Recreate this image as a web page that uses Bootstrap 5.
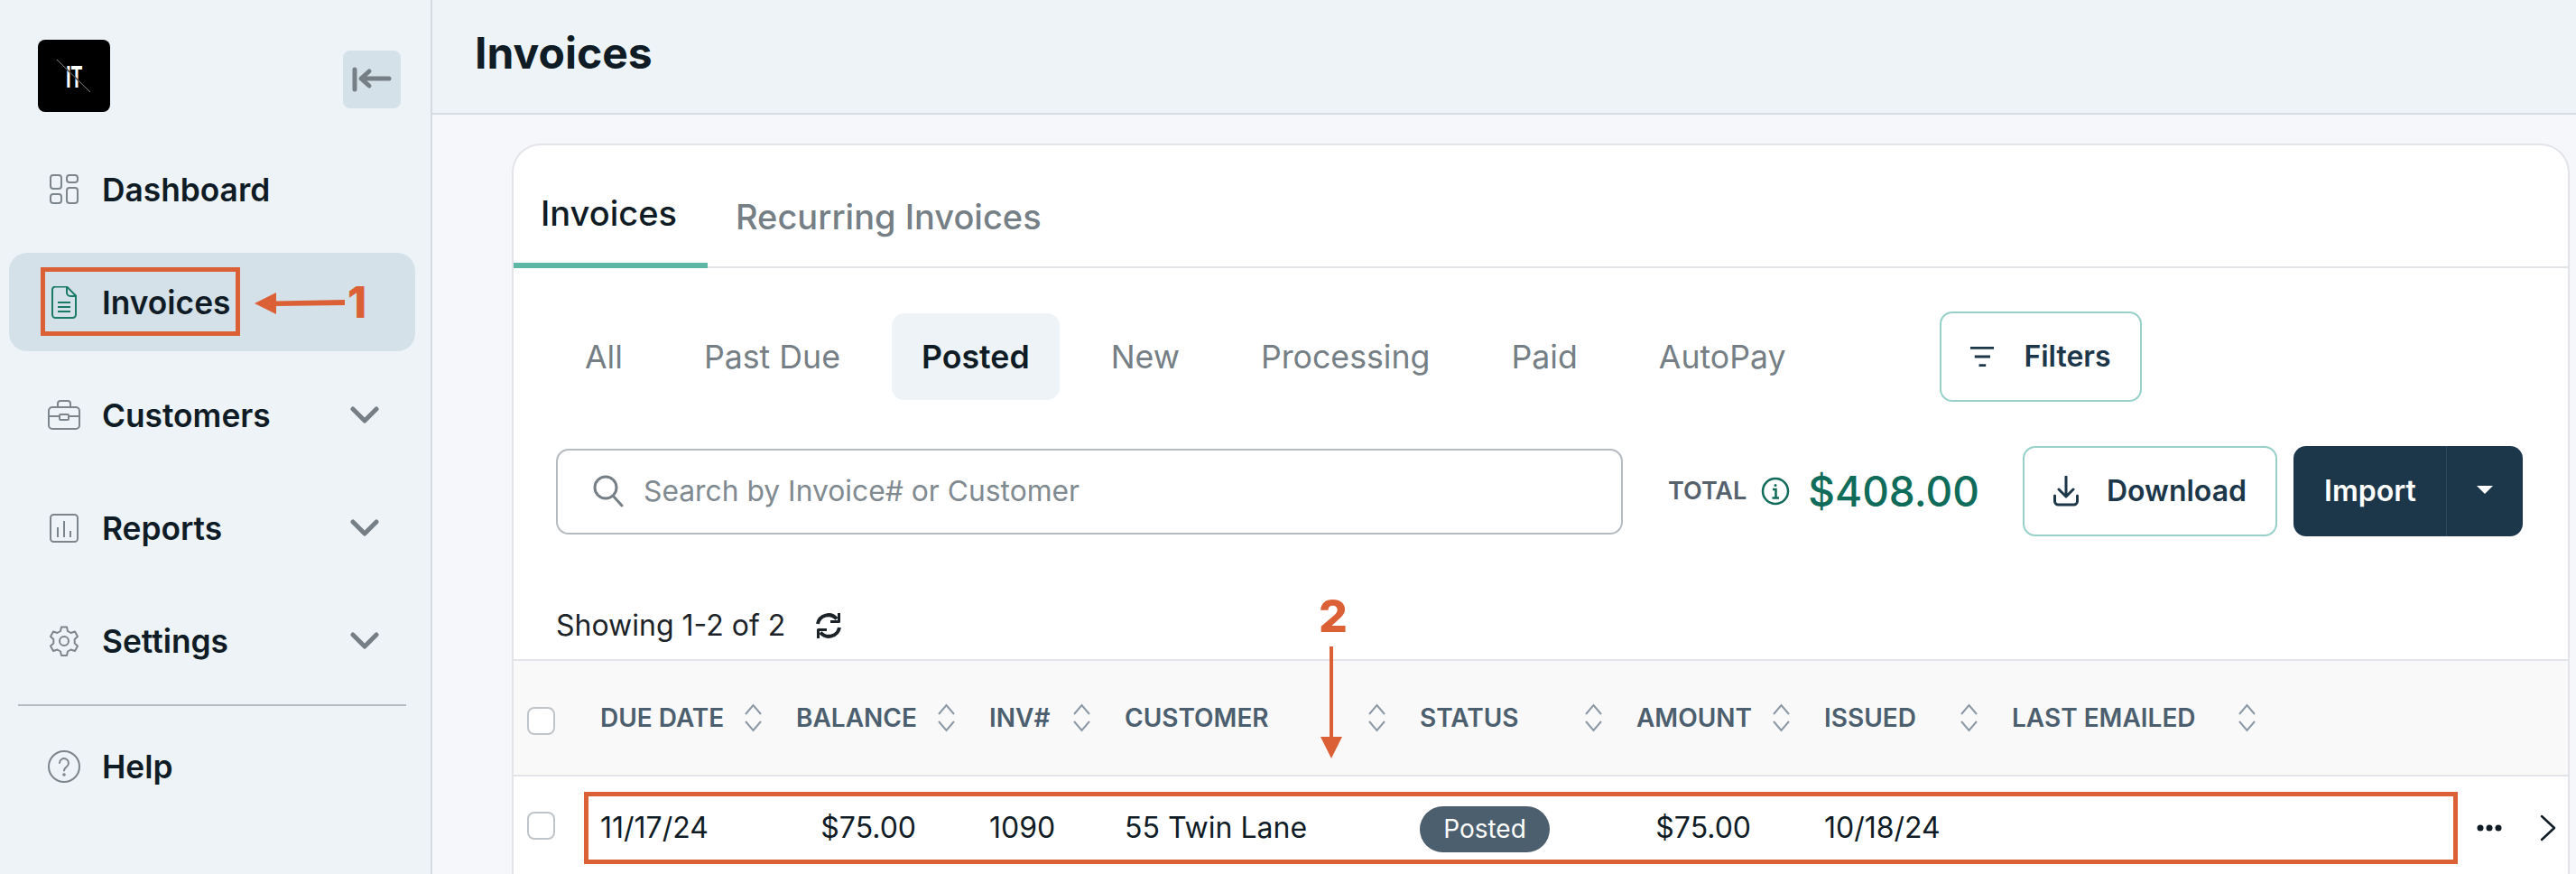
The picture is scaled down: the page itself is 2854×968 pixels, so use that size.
<!DOCTYPE html>
<html lang="en">
<head>
  <meta charset="UTF-8">
  <title>Invoices</title>
  <link href="https://cdn.jsdelivr.net/npm/bootstrap@5.3.3/dist/css/bootstrap.min.css" rel="stylesheet">
  <style>
    html, body { height: 968px; overflow: hidden; }
    body { font-family: Inter, "Liberation Sans", sans-serif; background: #f5f7fb; color: #0f1c26; position: relative; }

    .side-bar { width: 479px; flex: none; height: 968px; background: #eef3f7; border-right: 2px solid #d3dbe0; }
    .brand-row { padding: 44px 33px 0 42px; }
    .brand-logo { width: 80px; height: 80px; background: #000; border-radius: 8px; display: block; }
    .collapse-btn { width: 64px; height: 64px; margin-top: 12px; background: #d5e1e9; border: 0; border-radius: 8px; padding: 0; }
    .side-nav { margin: 31px 17px 0 10px; gap: 16px; }
    .side-link { height: 109px; padding: 0 40px 0 43px; border-radius: 20px; font-size: 35.3px; font-weight: 600; color: #0f1c26; gap: 24px; text-decoration: none; }
    .side-link .side-text { padding-top: 3px; }
    .side-link.is-on { background: #d5e1e9; }
    .side-link .slot { width: 36px; height: 36px; flex: none; }
    .side-link .caret-down { margin-left: auto; }
    .side-rule { height: 2px; margin: 0 10px; background: #b4bcc3; }
    .help-link { margin-top: -4px; }

    .top-head { height: 127px; flex: none; background: #eef3f7; border-bottom: 2px solid #d3dde3; padding: 0 47px 7px; }
    .top-head h1 { font-size: 48px; font-weight: 700; margin: 0; color: #0f1c26; }

    .page-area { padding: 32px 7px 0 88px; min-width: 0; }
    .inv-panel { height: 809px; background: #fff; border: 2px solid #e2e4ea; border-bottom: 0; border-radius: 32px 32px 0 0; overflow: hidden; }

    .tab-row { height: 136px; border-bottom: 2px solid #e2e4ea; }
    .tab-row .nav-link { font-size: 38px; font-weight: 500; height: 136px; padding: 56px 34px 0 30px; color: #757f85; line-height: 46px; }
    .tab-row .nav-link.active { color: #0f1c26; border-bottom: 6px solid #5cb8a5; padding-top: 52px; }
    .tab-row .tab-second { padding-left: 31px; padding-top: 56px; }

    .status-row { margin: 48px 0 0 46px; height: 100px; }
    .status-pills { gap: 24px; }
    .status-pills .nav-link { font-size: 35.7px; color: #757f85; padding: 0 33px; height: 96px; line-height: 96px; border-radius: 14px; }
    .status-pills .nav-link.active { background: #eef3f7; color: #0f1c26; font-weight: 600; }
    .outline-btn { height: 100px; border: 2px solid #97d0c8; border-radius: 14px; font-size: 32px; font-weight: 600; color: #1d374a; background: #fff; }
    .outline-btn:hover { border-color: #97d0c8; color: #1d374a; background: #fff; }
    .filter-btn { width: 224px; margin-left: 137px; padding: 0 32px; gap: 33px; }
    .dl-btn { width: 282px; padding: 0 32px; gap: 31px; margin-left: 48px; }

    .tool-row { margin: 49px 50px 0 47px; height: 100px; }
    .search-box { width: 1182px; height: 95px; border: 2px solid #b5bbc0; border-radius: 14px; padding: 0 39px; gap: 22px; font-size: 31.8px; }
    .search-box input { border: 0; outline: 0; padding: 0; width: 100%; color: #0f1c26; background: transparent; }
    .search-box input::placeholder { color: #7f8a91; opacity: 1; }
    .total-label { margin-left: 50px; font-size: 27px; font-weight: 600; color: #55626d; }
    .total-value { font-size: 46px; font-weight: 500; color: #0f6b5a; margin-left: 20px; }
    .import-group { margin-left: 18px; height: 100px; }
    .import-group .btn { background: #1d374a; color: #fff; font-size: 32px; font-weight: 600; border: 0; border-radius: 14px; }
    .import-group .btn-main { width: 170px; border-top-right-radius: 0; border-bottom-right-radius: 0; }
    .import-group .btn-split { width: 85px; border-left: 1px solid #2f4a5e; border-top-left-radius: 0; border-bottom-left-radius: 0; margin-left: 0; }

    .count-row { margin: 79px 0 17px 47px; height: 40px; font-size: 32px; color: #1c2328; gap: 32px; }

    .inv-table { table-layout: fixed; width: 100%; margin: 0; }
    .inv-table th, .inv-table td { padding: 0 22px 0 15px; vertical-align: middle; border-bottom: 0; box-shadow: none; background: transparent; }
    .inv-table thead tr { border-top: 2px solid #e2e4ea; border-bottom: 2px solid #e2e4ea; }
    .inv-table thead th { height: 128px; background: #f9f9f9; font-size: 28px; font-weight: 600; color: #4c5f6e; padding-bottom: 1px; }
    .inv-table tbody td { height: 108px; font-size: 32px; color: #0f1c26; padding-top: 6px; }
    .inv-table .tick { width: 31px; height: 31px; margin: 8px 0 0; border: 2px solid #bfc5c9; border-radius: 8px; display: block; }
    .inv-table tbody .tick { margin: 0 0 5px; }
    .money-cell { text-align: right; padding-right: 66px !important; }
    .posted-chip { display: inline-block; width: 144px; height: 51px; line-height: 51px; margin-top: 3px; text-align: center; background: #4c5f6e; color: #fff; border-radius: 26px; font-size: 28px; vertical-align: middle; }
    .inv-table .action-cell { padding-left: 0; padding-right: 0; }
    .row-actions { padding-left: 222px; gap: 41px; }

    .note-box { position: absolute; border: 5px solid #dc6036; }
    .note-one { left: 45px; top: 296px; width: 221px; height: 76px; }
    .note-two { left: 647px; top: 877px; width: 2076px; height: 80px; }
    .note-num { position: absolute; color: #dc6036; font-weight: 800; line-height: 1; }
    .num-one { left: 385px; top: 311px; font-size: 48px; }
    .num-two { left: 1461px; top: 657px; font-size: 50px; }
    .note-arrow { position: absolute; }
    .arrow-one { left: 282px; top: 322px; }
    .arrow-two { left: 1463px; top: 716px; }
  </style>
</head>
<body class="d-flex">

  <!-- Sidebar -->
  <aside class="side-bar d-flex flex-column">
    <div class="brand-row d-flex justify-content-between align-items-start">
      <svg class="brand-logo" viewBox="0 0 80 80">
        <text x="31" y="53" fill="#fff" font-family="Liberation Sans, sans-serif" font-weight="700" font-size="35" textLength="18" lengthAdjust="spacingAndGlyphs">IT</text>
        <line x1="21" y1="22" x2="58" y2="58" stroke="#000" stroke-width="1.6"/>
        <line x1="21" y1="22" x2="58" y2="58" stroke="#bbb" stroke-width="0.7"/>
      </svg>
      <button class="collapse-btn d-flex align-items-center justify-content-center" type="button" aria-label="Collapse">
        <svg width="44" height="28" viewBox="0 0 44 28" fill="none" stroke="#757f85" stroke-width="5" stroke-linecap="round" stroke-linejoin="round"><path d="M3 3v22M41 13H11M19 5l-9 8 9 8"/></svg>
      </button>
    </div>

    <nav class="side-nav d-flex flex-column">
      <a class="side-link d-flex align-items-center" href="#">
        <svg class="slot" viewBox="0 0 36 36" fill="none" stroke="#7c858b" stroke-width="2"><rect x="3" y="2" width="12" height="15" rx="3"/><rect x="21" y="2" width="12" height="8" rx="3"/><rect x="3" y="23" width="12" height="10" rx="3"/><rect x="21" y="16" width="12" height="17" rx="3"/></svg>
        <span class="side-text">Dashboard</span>
      </a>
      <a class="side-link is-on d-flex align-items-center" href="#">
        <svg class="slot" viewBox="0 0 36 36" fill="none" stroke="#1a7a68" stroke-width="2" stroke-linejoin="round"><path d="M8 0.500h13l10 10v21a3.500 3.500 0 0 1-3.500 3.500H8.500A3.500 3.500 0 0 1 5 31.500V3.500A3.500 3.500 0 0 1 8 0.500z"/><path d="M21 1v6a4 4 0 0 0 4 4h6M11 18h14M11 23h14M11 28h14"/></svg>
        <span class="side-text">Invoices</span>
      </a>
      <a class="side-link d-flex align-items-center" href="#">
        <svg class="slot" viewBox="0 0 36 36" fill="none" stroke="#7c858b" stroke-width="2" stroke-linejoin="round"><rect x="1" y="9" width="34" height="24" rx="4"/><path d="M11 9V5a3 3 0 0 1 3-3h8a3 3 0 0 1 3 3v4M1 19h12M23 19h12"/><rect x="13" y="17" width="10" height="6" rx="1"/></svg>
        <span class="side-text">Customers</span>
        <svg class="caret-down" width="32" height="20" viewBox="0 0 32 20" fill="none" stroke="#757f85" stroke-width="5" stroke-linecap="round" stroke-linejoin="round"><path d="M3 3l13 13L29 3"/></svg>
      </a>
      <a class="side-link d-flex align-items-center" href="#">
        <svg class="slot" viewBox="0 0 36 36" fill="none" stroke="#7c858b" stroke-width="2"><rect x="3" y="3" width="30" height="30" rx="3.500"/><path d="M11 17v11M18 10v18M25 21v7"/></svg>
        <span class="side-text">Reports</span>
        <svg class="caret-down" width="32" height="20" viewBox="0 0 32 20" fill="none" stroke="#757f85" stroke-width="5" stroke-linecap="round" stroke-linejoin="round"><path d="M3 3l13 13L29 3"/></svg>
      </a>
      <a class="side-link d-flex align-items-center" href="#">
        <svg class="slot" viewBox="0 0 36 36" fill="none" stroke="#7c858b" stroke-width="2" stroke-linejoin="round"><circle cx="18" cy="18" r="5"/><path d="M15 2.500h6l1 4.500 3.500 2 4.500-1.500 3 5.500-3.300 3v4.500l3.300 3-3 5.500-4.500-1.500-3.500 2-1 4.500h-6l-1-4.500-3.500-2-4.500 1.500-3-5.500 3.300-3v-4.500l-3.300-3 3-5.500 4.500 1.500 3.500-2z"/></svg>
        <span class="side-text">Settings</span>
        <svg class="caret-down" width="32" height="20" viewBox="0 0 32 20" fill="none" stroke="#757f85" stroke-width="5" stroke-linecap="round" stroke-linejoin="round"><path d="M3 3l13 13L29 3"/></svg>
      </a>
      <div class="side-rule"></div>
      <a class="side-link help-link d-flex align-items-center" href="#">
        <svg class="slot" viewBox="0 0 36 36" fill="none" stroke="#7c858b" stroke-width="2" stroke-linecap="round"><circle cx="18" cy="18" r="17"/><path d="M13 14a5 5 0 1 1 8 4c-2 1.500-3 2.500-3 4.500"/><circle cx="18" cy="27" r="0.800" fill="#7c858b"/></svg>
        <span class="side-text">Help</span>
      </a>
    </nav>
  </aside>

  <!-- Main -->
  <main class="flex-grow-1 d-flex flex-column">
    <header class="top-head d-flex align-items-center"><h1>Invoices</h1></header>

    <div class="page-area">
      <section class="inv-panel">
        <ul class="nav tab-row">
          <li class="nav-item"><a class="nav-link active" href="#">Invoices</a></li>
          <li class="nav-item"><a class="nav-link tab-second" href="#">Recurring Invoices</a></li>
        </ul>

        <div class="status-row d-flex align-items-center">
          <ul class="nav status-pills flex-nowrap">
            <li class="nav-item"><a class="nav-link" href="#">All</a></li>
            <li class="nav-item"><a class="nav-link" href="#">Past Due</a></li>
            <li class="nav-item"><a class="nav-link active" href="#">Posted</a></li>
            <li class="nav-item"><a class="nav-link" href="#">New</a></li>
            <li class="nav-item"><a class="nav-link" href="#">Processing</a></li>
            <li class="nav-item"><a class="nav-link" href="#">Paid</a></li>
            <li class="nav-item"><a class="nav-link" href="#">AutoPay</a></li>
          </ul>
          <button class="btn outline-btn filter-btn d-flex align-items-center" type="button">
            <svg width="28" height="26" viewBox="0 0 28 26" fill="none" stroke="#1d374a" stroke-width="3"><path d="M0 3h28M5 13h18M10 23h8"/></svg>
            Filters
          </button>
        </div>

        <div class="tool-row d-flex align-items-center">
          <label class="search-box d-flex align-items-center">
            <svg width="34" height="36" viewBox="0 0 34 36" fill="none" stroke="#757f85" stroke-width="3" stroke-linecap="round" class="flex-shrink-0"><circle cx="14" cy="14" r="12"/><path d="M23 24l9 10"/></svg>
            <input type="text" placeholder="Search by Invoice# or Customer">
          </label>
          <span class="total-label">TOTAL</span>
          <svg class="ms-3" width="32" height="32" viewBox="0 0 32 32" fill="none" stroke="#106b5a" stroke-width="2.500"><circle cx="16" cy="16" r="14"/><circle cx="16" cy="9.500" r="1.500" fill="#106b5a" stroke="none"/><path d="M13 14h3.500v9M12.500 23.500h7.500"/></svg>
          <span class="total-value">$408.00</span>
          <button class="btn outline-btn dl-btn d-flex align-items-center" type="button">
            <svg width="28" height="34" viewBox="0 0 28 34" fill="none" stroke="#1d374a" stroke-width="3" stroke-linecap="round" stroke-linejoin="round" class="flex-shrink-0"><path d="M14 1v22M6 15l8 8 8-8"/><path d="M1.500 22v6a4 4 0 0 0 4 4h17a4 4 0 0 0 4-4v-6"/></svg>
            Download
          </button>
          <div class="btn-group import-group">
            <button class="btn btn-main" type="button">Import</button>
            <button class="btn btn-split dropdown-toggle dropdown-toggle-split" type="button" aria-label="More"></button>
          </div>
        </div>

        <div class="count-row d-flex align-items-center">
          Showing 1-2 of 2
          <svg width="32" height="30" viewBox="0 0 32 30" fill="none" stroke="#1c2328" stroke-width="4" stroke-linejoin="round"><path d="M4 13A12 12 0 0 1 25 7.500"/><path d="M28 17A12 12 0 0 1 7 22.500"/><path d="M27.500 1v9.500H18" stroke-width="3"/><path d="M4.500 29v-9.500H14" stroke-width="3"/></svg>
        </div>

        <table class="table inv-table">
          <colgroup><col width="81"><col width="217"><col width="214"><col width="150"><col width="327"><col width="240"><col width="208"><col width="208"><col width="308"><col></colgroup>
          <thead>
            <tr>
              <th><input class="form-check-input tick" type="checkbox" aria-label="Select all"></th>
              <th><div class="d-flex justify-content-between align-items-center">DUE DATE <svg width="21" height="32" viewBox="0 0 21 32" fill="none" stroke="#8a99a5" stroke-width="2"><path d="M2 12l8.500-10L19 12M2 20l8.500 10L19 20"/></svg></div></th>
              <th><div class="d-flex justify-content-between align-items-center">BALANCE <svg width="21" height="32" viewBox="0 0 21 32" fill="none" stroke="#8a99a5" stroke-width="2"><path d="M2 12l8.500-10L19 12M2 20l8.500 10L19 20"/></svg></div></th>
              <th><div class="d-flex justify-content-between align-items-center">INV# <svg width="21" height="32" viewBox="0 0 21 32" fill="none" stroke="#8a99a5" stroke-width="2"><path d="M2 12l8.500-10L19 12M2 20l8.500 10L19 20"/></svg></div></th>
              <th><div class="d-flex justify-content-between align-items-center">CUSTOMER <svg width="21" height="32" viewBox="0 0 21 32" fill="none" stroke="#8a99a5" stroke-width="2"><path d="M2 12l8.500-10L19 12M2 20l8.500 10L19 20"/></svg></div></th>
              <th><div class="d-flex justify-content-between align-items-center">STATUS <svg width="21" height="32" viewBox="0 0 21 32" fill="none" stroke="#8a99a5" stroke-width="2"><path d="M2 12l8.500-10L19 12M2 20l8.500 10L19 20"/></svg></div></th>
              <th><div class="d-flex justify-content-between align-items-center">AMOUNT <svg width="21" height="32" viewBox="0 0 21 32" fill="none" stroke="#8a99a5" stroke-width="2"><path d="M2 12l8.500-10L19 12M2 20l8.500 10L19 20"/></svg></div></th>
              <th><div class="d-flex justify-content-between align-items-center">ISSUED <svg width="21" height="32" viewBox="0 0 21 32" fill="none" stroke="#8a99a5" stroke-width="2"><path d="M2 12l8.500-10L19 12M2 20l8.500 10L19 20"/></svg></div></th>
              <th><div class="d-flex justify-content-between align-items-center">LAST EMAILED <svg width="21" height="32" viewBox="0 0 21 32" fill="none" stroke="#8a99a5" stroke-width="2"><path d="M2 12l8.500-10L19 12M2 20l8.500 10L19 20"/></svg></div></th>
              <th></th>
            </tr>
          </thead>
          <tbody>
            <tr>
              <td><input class="form-check-input tick" type="checkbox" aria-label="Select row"></td>
              <td>11/17/24</td>
              <td class="money-cell">$75.00</td>
              <td>1090</td>
              <td>55 Twin Lane</td>
              <td><span class="posted-chip">Posted</span></td>
              <td class="money-cell">$75.00</td>
              <td>10/18/24</td>
              <td></td>
              <td class="action-cell">
                <div class="row-actions d-flex align-items-center">
                  <svg class="flex-shrink-0" width="28" height="8" viewBox="0 0 28 8" fill="#0f1c26"><circle cx="4" cy="4" r="3.500"/><circle cx="14" cy="4" r="3.500"/><circle cx="24" cy="4" r="3.500"/></svg>
                  <svg class="flex-shrink-0" width="20" height="30" viewBox="0 0 20 30" fill="none" stroke="#0f1c26" stroke-width="2.500" stroke-linecap="round" stroke-linejoin="round"><path d="M3 2l14 13L3 28"/></svg>
                </div>
              </td>
            </tr>
          </tbody>
        </table>
      </section>
    </div>
  </main>

  <!-- Annotations drawn over the screenshot -->
  <div class="note-box note-one"></div>
  <svg class="note-arrow arrow-one" width="100" height="28" viewBox="0 0 100 28" fill="#dc6036"><path d="M0 14L24 2v9.500l76-1.500v6l-76 1v9z"/></svg>
  <span class="note-num num-one">1</span>
  <div class="note-box note-two"></div>
  <span class="note-num num-two">2</span>
  <svg class="note-arrow arrow-two" width="24" height="124" viewBox="0 0 24 124" fill="#dc6036"><path d="M10 0h4v100h10l-12 24L0 100h10z"/></svg>

  <script src="https://cdn.jsdelivr.net/npm/bootstrap@5.3.3/dist/js/bootstrap.bundle.min.js"></script>
</body>
</html>
